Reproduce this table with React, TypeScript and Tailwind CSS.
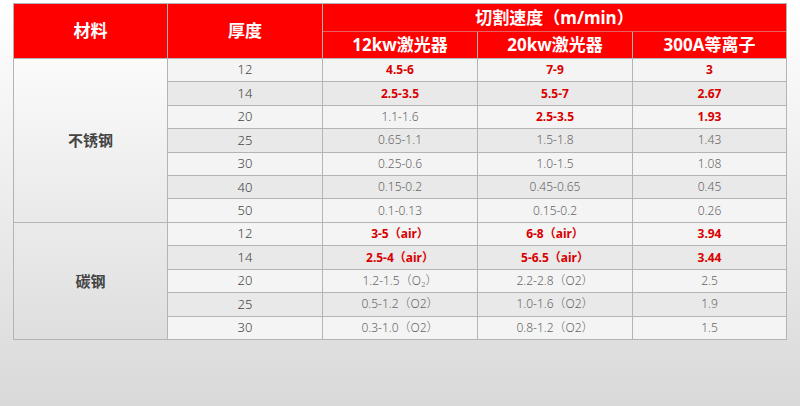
const ss = [
  { t: "12", a: "4.5-6", b: "7-9", c: "3", hot: [true, true, true] },
  { t: "14", a: "2.5-3.5", b: "5.5-7", c: "2.67", hot: [true, true, true] },
  { t: "20", a: "1.1-1.6", b: "2.5-3.5", c: "1.93", hot: [false, true, true] },
  { t: "25", a: "0.65-1.1", b: "1.5-1.8", c: "1.43", hot: [false, false, false] },
  { t: "30", a: "0.25-0.6", b: "1.0-1.5", c: "1.08", hot: [false, false, false] },
  { t: "40", a: "0.15-0.2", b: "0.45-0.65", c: "0.45", hot: [false, false, false] },
  { t: "50", a: "0.1-0.13", b: "0.15-0.2", c: "0.26", hot: [false, false, false] },
];

const cs = [
  { t: "12", a: "3-5（air）", b: "6-8（air）", c: "3.94", hot: [true, true, true] },
  { t: "14", a: "2.5-4（air）", b: "5-6.5（air）", c: "3.44", hot: [true, true, true] },
  { t: "20", a: "O2SUB", b: "2.2-2.8（O2）", c: "2.5", hot: [false, false, false] },
  { t: "25", a: "0.5-1.2（O2）", b: "1.0-1.6（O2）", c: "1.9", hot: [false, false, false] },
  { t: "30", a: "0.3-1.0（O2）", b: "0.8-1.2（O2）", c: "1.5", hot: [false, false, false] },
];

type Row = (typeof ss)[number];

function Cell({ v, hot, dark }: { v: string; hot: boolean; dark: boolean }) {
  return (
    <div
      className={`flex items-center justify-center text-[12px] ${dark ? "bg-[#e9e9e9]" : "bg-[#f4f4f4]"} ${
        hot ? "font-bold text-[#d90000]" : "font-light text-[#666]"
      }`}
    >
      {v === "O2SUB" ? (
        <span>
          1.2-1.5（O<sub className="text-[8px]">2</sub>）
        </span>
      ) : (
        v
      )}
    </div>
  );
}

function Rows({ rows }: { rows: Row[] }) {
  return (
    <>
      {rows.map((r, i) => {
        const dark = i % 2 === 1;
        return (
          <div key={r.t} className="contents">
            <div
              className={`flex items-center justify-center text-[13px] font-light text-[#444] ${
                dark ? "bg-[#e9e9e9]" : "bg-[#f4f4f4]"
              }`}
            >
              {r.t}
            </div>
            <Cell v={r.a} hot={r.hot[0]} dark={dark} />
            <Cell v={r.b} hot={r.hot[1]} dark={dark} />
            <Cell v={r.c} hot={r.hot[2]} dark={dark} />
          </div>
        );
      })}
    </>
  );
}

export default function App() {
  return (
    <div
      className="w-[800px] h-[406px] bg-gradient-to-b from-white via-[#ececec] to-[#d9d9d9] pt-[3px] pl-[13px]"
      style={{ fontFamily: '"Noto Sans", "Noto Sans CJK SC", sans-serif' }}
    >
      <div className="grid w-[774px] h-[337px] gap-px p-px bg-[#b4b4b4] grid-cols-[153px_154px_154px_154px_153px] grid-rows-[27px_26px_repeat(12,minmax(0,1fr))]">
        {/* header */}
        <div className="row-span-2 bg-[#fe0000] flex items-center justify-center text-white font-bold text-[17px]">
          材料
        </div>
        <div className="row-span-2 bg-[#fe0000] flex items-center justify-center text-white font-bold text-[17px]">
          厚度
        </div>
        <div className="col-span-3 bg-[#fe0000] flex items-center justify-center text-white font-bold text-[17px] -mb-px border-b border-[#e86060]">
          切割速度（m/min）
        </div>
        <div className="bg-[#fe0000] flex items-center justify-center text-white font-bold text-[17px]">
          12kw激光器
        </div>
        <div className="bg-[#fe0000] flex items-center justify-center text-white font-bold text-[17px]">
          20kw激光器
        </div>
        <div className="bg-[#fe0000] flex items-center justify-center text-white font-bold text-[17px]">
          300A等离子
        </div>

        {/* stainless */}
        <div className="row-span-7 bg-gradient-to-b from-[#fbfbfb] to-[#e9e9e9] flex items-center justify-center font-bold text-[15px] text-[#444]">
          不锈钢
        </div>
        <Rows rows={ss} />

        {/* carbon */}
        <div className="row-span-5 bg-gradient-to-b from-[#ebebeb] to-[#dedede] flex items-center justify-center font-bold text-[15px] text-[#444]">
          碳钢
        </div>
        <Rows rows={cs} />
      </div>
    </div>
  );
}
